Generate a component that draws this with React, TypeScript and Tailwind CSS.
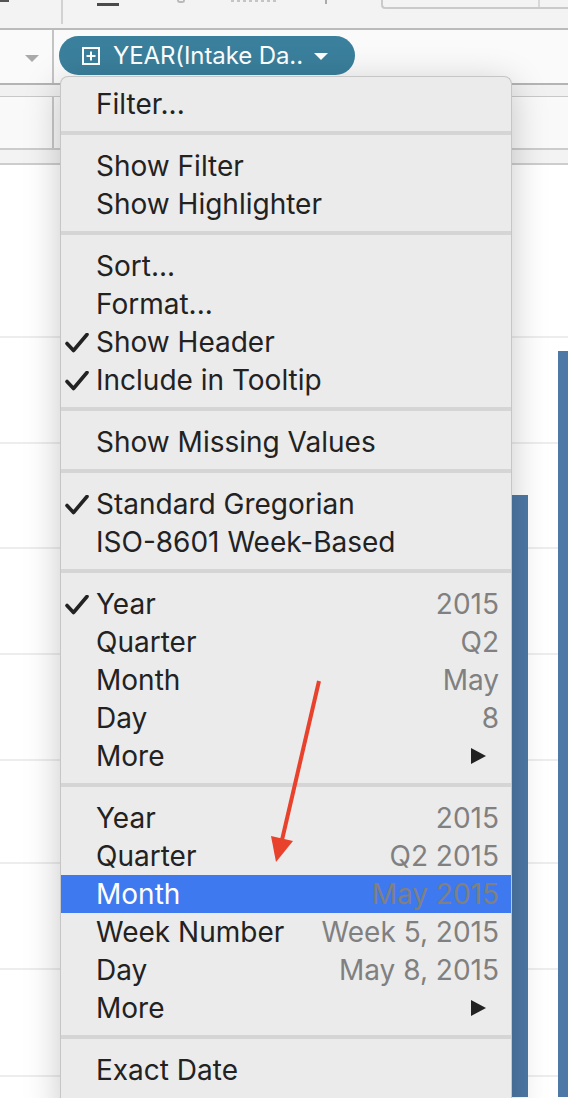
import React from "react";

type Item = { label: string; value?: string; checked?: boolean; sub?: boolean; active?: boolean };

const groups: Item[][] = [
  [{ label: "Filter..." }],
  [{ label: "Show Filter" }, { label: "Show Highlighter" }],
  [
    { label: "Sort..." },
    { label: "Format..." },
    { label: "Show Header", checked: true },
    { label: "Include in Tooltip", checked: true },
  ],
  [{ label: "Show Missing Values" }],
  [{ label: "Standard Gregorian", checked: true }, { label: "ISO-8601 Week-Based" }],
  [
    { label: "Year", value: "2015", checked: true },
    { label: "Quarter", value: "Q2" },
    { label: "Month", value: "May" },
    { label: "Day", value: "8" },
    { label: "More", sub: true },
  ],
  [
    { label: "Year", value: "2015" },
    { label: "Quarter", value: "Q2 2015" },
    { label: "Month", value: "May 2015", active: true },
    { label: "Week Number", value: "Week 5, 2015" },
    { label: "Day", value: "May 8, 2015" },
    { label: "More", sub: true },
  ],
  [{ label: "Exact Date" }],
];

const gridlines = [337, 443, 548, 654, 760, 863, 969, 1076];

function Check() {
  return (
    <svg width="24" height="20" viewBox="0 0 24 20" className="absolute left-[4px] top-[10px]">
      <path d="M2 10.5 L8.5 17.5 L22 1.5" fill="none" stroke="#222" strokeWidth="3.6" strokeLinecap="round" strokeLinejoin="round" />
    </svg>
  );
}

function MenuRow({ item }: { item: Item }) {
  return (
    <div
      className={`relative flex h-[38px] items-center pl-[35px] pr-[12px] ${
        item.active ? "bg-[#3f79f0] text-white" : "text-[#222]"
      }`}
    >
      {item.checked && <Check />}
      <span className="flex-1 whitespace-nowrap">{item.label}</span>
      {item.value && <span className="whitespace-nowrap text-[#808080]">{item.value}</span>}
      {item.sub && (
        <svg width="15" height="16" viewBox="0 0 15 16" className="mr-[13px]">
          <path d="M0 0 L15 8 L0 16 Z" fill="#222" />
        </svg>
      )}
    </div>
  );
}

function Menu() {
  return (
    <div className="absolute left-[60px] top-[76px] w-[452px] h-[1040px] rounded-t-[8px] border border-b-0 border-[#c6c6c6] bg-[#ebebeb] shadow-[0_8px_36px_rgba(0,0,0,0.22)] text-[28px] leading-none font-[family-name:Inter,sans-serif]">
      {groups.map((g, gi) => (
        <div key={gi}>
          {gi > 0 && <div className="h-[4px] bg-[#d5d5d5]" />}
          <div className={gi === 0 ? "pt-[8px] pb-[8px]" : "pt-[12px] pb-[8px]"}>
            {g.map((it, i) => (
              <MenuRow key={i} item={it} />
            ))}
          </div>
        </div>
      ))}
    </div>
  );
}

export default function App() {
  return (
    <div className="relative h-[1098px] w-[568px] overflow-hidden bg-white font-[family-name:Inter,sans-serif]">
      {/* toolbar strip, cut off at top */}
      <div className="flex h-[30px] border-b-2 border-[#bbbbbb] bg-[#f3f3f3]">
        <div className="relative h-[24px] w-[63px] border-r-2 border-[#d2d2d2]">
          <div className="absolute left-0 top-0 h-[2px] w-[9px] bg-[#555]" />
        </div>
        <div className="relative flex-1">
          <div className="absolute left-[34px] top-[3px] h-[3px] w-[22px] bg-[#4a4a4a]" />
          <div className="absolute left-[114px] top-0 h-[3px] w-[8px] rounded-b-full border-2 border-t-0 border-[#b8b8b8]" />
          <div className="absolute left-[168px] top-0 flex gap-[3px]">
            {Array.from({ length: 8 }).map((_, i) => (
              <div key={i} className="h-[2px] w-[3px] bg-[#c4c4c4]" />
            ))}
          </div>
          <div className="absolute left-[262px] top-0 h-[4px] w-[2px] bg-[#aaa]" />
        </div>
        <div className="flex h-[9px] w-[187px] rounded-bl-[4px] border-b-2 border-l-2 border-[#cacaca] bg-[#f3f3f3]">
          <div className="w-[157px] border-r-2 border-[#d8d8d8]" />
        </div>
      </div>

      {/* shelf row */}
      <div className="flex h-[53px] bg-[#fafafa]">
        <div className="flex w-[54px] items-center justify-end border-r-2 border-[#c4c4c4] pr-[13px] pt-[4px]">
          <svg width="14" height="7" viewBox="0 0 14 7">
            <path d="M0 0 L14 0 L7 7 Z" fill="#a9a9a9" />
          </svg>
        </div>
        <div className="ml-[5px] mt-[6px] flex h-[39px] w-[296px] items-center rounded-full bg-[#3a7f9c] pl-[23px] text-[24px] text-white">
          <svg width="18" height="18" viewBox="0 0 18 18" className="mr-[13px]">
            <rect x="1" y="1" width="16" height="16" fill="none" stroke="white" strokeWidth="2" />
            <path d="M9 4.5 V13.5 M4.5 9 H13.5" stroke="white" strokeWidth="2" />
          </svg>
          <span className="tracking-[-0.1px]">YEAR(Intake Da..</span>
          <svg width="14" height="7" viewBox="0 0 14 7" className="ml-[11px] mt-[1px]">
            <path d="M0 0 L14 0 L7 7 Z" fill="white" />
          </svg>
        </div>
      </div>

      {/* header bands */}
      <div className="h-[14px] border-t-2 border-b border-t-[#b4b4b4] border-b-[#c8c8c8] bg-[#f1f1f1]" />
      <div className="flex h-[53px] border-b-2 border-[#cccccc] bg-[#f9f9f9]">
        <div className="w-[54px] border-r-2 border-[#c8c8c8]" />
      </div>
      <div className="h-[15px] border-b-2 border-[#cdcdcd] bg-[#f3f3f3]" />

      {/* chart */}
      <svg width="568" height="932" viewBox="0 166 568 932" className="block">
        {gridlines.map((y) => (
          <rect key={y} x="0" y={y} width="568" height="2" fill="#ededed" />
        ))}
        <rect x="512" y="496" width="16" height="602" fill="#4e79a7" />
        <rect x="558" y="352" width="10" height="746" fill="#4e79a7" />
      </svg>

      <Menu />

      {/* annotation arrow */}
      <svg width="568" height="1098" className="pointer-events-none absolute left-0 top-0">
        <path d="M319 681 L282 840" stroke="#e8412c" strokeWidth="4" fill="none" />
        <path d="M276 862 L271 836 L293 841 Z" fill="#e8412c" />
      </svg>
    </div>
  );
}
